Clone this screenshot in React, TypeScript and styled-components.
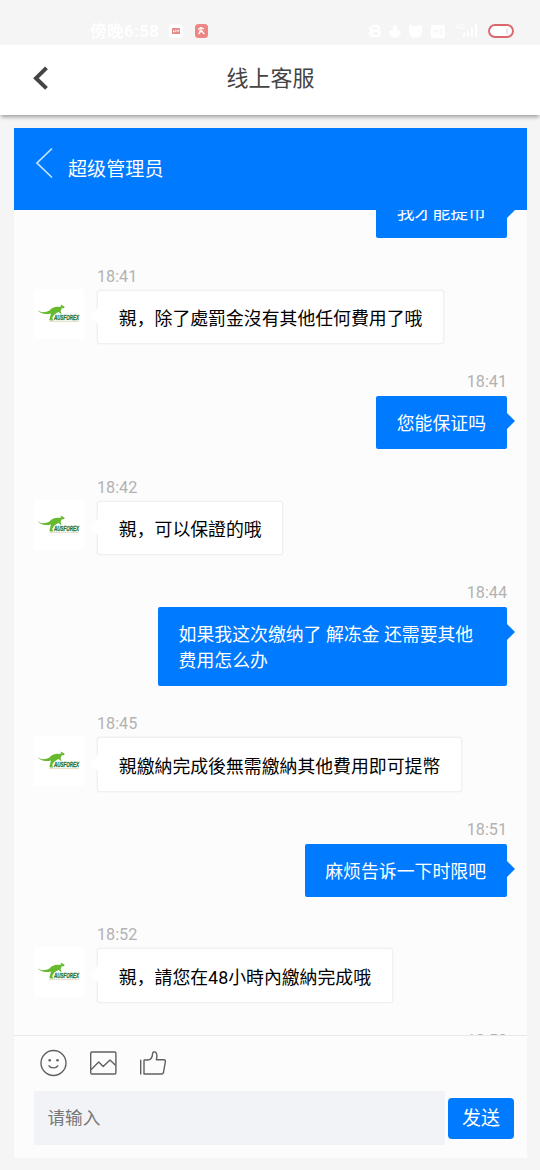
import React from "react";
import styled, { createGlobalStyle } from "styled-components";

const BLUE = "#007aff";

const GlobalStyle = createGlobalStyle`
  * { box-sizing: border-box; }
  body {
    margin: 0;
    background: #f5f5f5;
    font-family: Roboto, "Noto Sans CJK SC", sans-serif;
  }
`;

const Screen = styled.div`
  width: 540px;
  height: 1170px;
  display: flex;
  flex-direction: column;
  overflow: hidden;
  background: #f5f5f5;
`;

const StatusBar = styled.div`
  height: 45px;
  flex: none;
  display: flex;
  justify-content: space-between;
  align-items: flex-start;
  padding: 20px 24px 0 90px;
`;

const StatusGroup = styled.div<{ $gap: number }>`
  display: flex;
  align-items: center;
  gap: ${(p) => p.$gap}px;
  height: 22px;
`;

const Clock = styled.span`
  width: 71px;
  padding-top: 1px;
  font-size: 16.4px;
  line-height: 22px;
  font-weight: 700;
  color: #fff;
  white-space: nowrap;
  letter-spacing: 0.6px;
`;

const TitleBar = styled.header`
  position: relative;
  height: 70px;
  flex: none;
  display: grid;
  grid-template-columns: 80px 1fr 80px;
  align-items: center;
  background: #fff;
  box-shadow: 0 3px 4px -1px rgba(0, 0, 0, 0.36);
`;

const BackButton = styled.button`
  display: flex;
  align-items: center;
  height: 70px;
  padding: 0 0 4px 33px;
  border: 0;
  background: none;
`;

const Title = styled.h1`
  margin: 0;
  padding-left: 1px;
  font-size: 22px;
  line-height: 68px;
  height: 70px;
  font-weight: 400;
  text-align: center;
  color: #444;
`;

const Panel = styled.main`
  width: 513px;
  height: 1030px;
  flex: none;
  margin: 13px 0 0 14px;
  display: flex;
  flex-direction: column;
  background: #fcfcfc;
`;

const AgentBar = styled.div`
  height: 82px;
  flex: none;
  display: flex;
  align-items: center;
  gap: 15px;
  padding: 0 0 0 21px;
  background: ${BLUE};
  color: #fff;
  svg { margin-bottom: 13px; }
`;

const AgentName = styled.span`
  padding-top: 2px;
  font-size: 19.1px;
  line-height: 28px;
`;

const History = styled.section`
  height: 825px;
  flex: none;
  overflow: hidden;
`;

const MessageList = styled.div`
  margin-top: -24.7px;
`;

const MessageRow = styled.article<{ $mine?: boolean }>`
  display: flex;
  flex-direction: ${(p) => (p.$mine ? "row-reverse" : "row")};
  gap: 14px;
  padding: 0 20px;
  margin-bottom: 24.9px;
`;

const Avatar = styled.div`
  width: 50px;
  height: 50px;
  flex: none;
  margin-top: 26px;
  background: #fff;
  svg { display: block; }
`;

const MessageBody = styled.div<{ $mine?: boolean }>`
  display: flex;
  flex-direction: column;
  align-items: ${(p) => (p.$mine ? "flex-end" : "flex-start")};
  max-width: 365px;
`;

const Time = styled.time<{ $mine?: boolean }>`
  height: 28px;
  margin: ${(p) => (p.$mine ? "0" : "0 0 0 -1px")};
  font-size: 16.2px;
  line-height: 28px;
  color: #b2b2b2;
`;

const Bubble = styled.div<{ $mine?: boolean }>`
  position: relative;
  max-width: ${(p) => (p.$mine ? "349px" : "365px")};
  padding: ${(p) => (p.$mine ? "14.7px 21px 12.1px 20.6px" : "15.2px 20.8px 11.6px")};
  border-radius: 2px;
  font-size: 17.86px;
  line-height: 25.8px;
  color: ${(p) => (p.$mine ? "#fff" : "#000")};
  background: ${(p) => (p.$mine ? BLUE : "#fff")};
  box-shadow: ${(p) => (p.$mine ? "none" : "0 0 0 1.5px #f1f1f1")};
  &::after {
    content: "";
    position: absolute;
    top: 17px;
    ${(p) => (p.$mine ? "right: -8px;" : "left: -8px;")}
    border: 8px solid transparent;
    border-width: 8px ${(p) => (p.$mine ? "0 8px 8px" : "8px 8px 0")};
    border-${(p) => (p.$mine ? "left" : "right")}-color: ${(p) => (p.$mine ? BLUE : "#fff")};
  }
`;

const Composer = styled.footer`
  flex: 1;
  border-top: 1.5px solid #e8e8e8;
`;

const Tools = styled.div`
  height: 55px;
  display: flex;
  align-items: center;
  gap: 22px;
  padding: 0 0 2px 25px;
`;

const EntryRow = styled.div`
  display: flex;
  align-items: center;
  gap: 3px;
  padding-left: 20px;
`;

const Entry = styled.input`
  width: 411px;
  height: 54px;
  padding: 0 14px 0 13.5px;
  border: 0;
  outline: 0;
  background: #f2f3f7;
  font: 17.6px Roboto, "Noto Sans CJK SC", sans-serif;
  &::placeholder { color: #777; opacity: 1; }
`;

const SendButton = styled.button`
  width: 66px;
  height: 41px;
  padding: 0;
  border: 0;
  border-radius: 4px;
  background: ${BLUE};
  color: #fff;
  font: 19px/41px Roboto, "Noto Sans CJK SC", sans-serif;
`;

const Kangaroo = () => (
  <svg width="50" height="50" viewBox="0 0 50 50">
    <path
      fill="#67b92e"
      d="M3.3 20.5C6 24.2 11 23.8 15.5 21.6C18 18.5 21.5 17.4 25 18L27.4 17.3L26.4 15.5L28.6 16.4L30.8 18L29.8 19.3L27.8 19.3L26.6 22L27.6 25.4L24.6 23L22.6 24L20 26L18.2 29L19.2 31.5H16.2L15.4 30.5L17 24.4C11 25.8 5.5 24.6 3.3 20.5Z"
    />
    <text x="20" y="31" textLength="25" lengthAdjust="spacingAndGlyphs" fontFamily="Liberation Sans" fontSize="7.2" fontWeight="700" fontStyle="italic" fill="#1d7434" stroke="#1d7434" strokeWidth="0.3">AUSFOREX</text>
    <path d="M15 32.6H45" stroke="#e0d3ab" strokeWidth="0.7" />
  </svg>
);

const NoticeIcons = () => (
  <svg width="42" height="16" viewBox="0 0 42 16">
    <rect x="0" y="1" width="14" height="14" rx="4" fill="#fff" />
    <rect x="3" y="5" width="8" height="6" rx="0.5" fill="#e88a8a" />
    <path d="M4.5 7V9L6.5 8.5V6.8M8 9V7L9.5 8.5V6.5" fill="none" stroke="#fff" strokeWidth="0.7" />
    <rect x="26" y="1" width="13" height="14" rx="3.5" fill="#ee8585" />
    <path d="M29 6.5L32 4.5L35 6M32 4.5V8L35.5 11M32 8L29.5 11M30 8H34" fill="none" stroke="#fff" strokeWidth="1.2" />
  </svg>
);

const SystemIcons = () => (
  <svg width="148" height="22" viewBox="0 0 148 22">
    <g fill="none" stroke="#fff" strokeWidth="2.4">
      <path d="M1 7L4 10L1 15M4 6H8C12 6 12 11 8 11H4V16H8C13 16 13 11 8 11" />
    </g>
    <g fill="#fff">
      <path d="M27 5C29 5 30 8 29 10L33 11C33 20 21 20 21 11L25 10C24 8 25 5 27 5Z" />
      <path d="M41 5L46 6H49L54 5V12C53 20 42 20 41 12Z" />
      <rect x="63" y="5" width="14" height="13" rx="2" />
      <path d="M95 13h2v4h-2zM99 11h2v6h-2zM103 8h2v9h-2zM107 4h2v13h-2z" />
      <text x="87" y="9" fontSize="8" fontFamily="Roboto">4G</text>
    </g>
    <path d="M45 10L47 12M50 12L52 10M66 9V14M66 11.5H69M69 9V14M72 9V14H74V9Z" stroke="#f5f5f5" fill="none" />
    <rect x="121" y="5" width="24" height="12" rx="6" fill="#fff" stroke="#db676c" strokeWidth="1.9" />
    <path d="M139 8.5v5" stroke="#ccc" />
  </svg>
);

const SmileIcon = () => (
  <svg width="28" height="28" viewBox="0 0 28 28" fill="none" stroke="#606060" strokeWidth="1.4" strokeLinecap="round">
    <circle cx="14.5" cy="14" r="12.5" />
    <path d="M10 16.8C11.5 19.6 17.3 19.6 18.8 16.8" />
    <circle cx="10.7" cy="11.2" r="1.3" fill="#606060" stroke="none" />
    <circle cx="18.5" cy="11.2" r="1.3" fill="#606060" stroke="none" />
  </svg>
);

const PictureIcon = () => (
  <svg width="28" height="28" viewBox="0 0 28 28" fill="none" stroke="#606060" strokeWidth="1.4" strokeLinejoin="round">
    <rect x="1.7" y="3" width="25.2" height="22" rx="1.3" />
    <path d="M2 20.7L9.7 13L14.2 17.6L21 11L26.7 16.5" />
  </svg>
);

const LikeIcon = () => (
  <svg width="28" height="28" viewBox="0 0 28 28" fill="none" stroke="#606060" strokeWidth="1.4" strokeLinejoin="round" strokeLinecap="round">
    <path d="M1.7 11.2V25M5 11.7V25H22.5Q24 25 24.4 23.8L26.4 12.5Q26.5 10.8 25 10.8H17.4C18.2 8.2 18 5.5 17.3 4Q16.5 2.6 14.8 3Q13.6 3.3 13.5 5C13.4 8.2 11.8 10.8 8.5 11H5.7Q5 11 5 11.7Z" />
  </svg>
);

type Message = { time?: string; text?: string; mine?: boolean };

const messages: Message[] = [
  { text: "我才能提币", mine: true },
  { time: "18:41", text: "親，除了處罰金沒有其他任何費用了哦" },
  { time: "18:41", text: "您能保证吗", mine: true },
  { time: "18:42", text: "親，可以保證的哦" },
  { time: "18:44", text: "如果我这次缴纳了 解冻金 还需要其他费用怎么办", mine: true },
  { time: "18:45", text: "親繳納完成後無需繳納其他費用即可提幣" },
  { time: "18:51", text: "麻烦告诉一下时限吧", mine: true },
  { time: "18:52", text: "親，請您在48小時內繳納完成哦" },
  { time: "18:53", mine: true },
];

export default function App() {
  return (
    <Screen>
      <GlobalStyle />
      <StatusBar>
        <StatusGroup $gap={8}>
          <Clock>傍晚6:58</Clock>
          <NoticeIcons />
        </StatusGroup>
        <StatusGroup $gap={0}>
          <SystemIcons />
        </StatusGroup>
      </StatusBar>
      <TitleBar>
        <BackButton aria-label="返回">
          <svg width="16" height="24" viewBox="0 0 16 24" fill="none" stroke="#444" strokeWidth="4">
            <path d="M13.5 1.8L3 12.2L13.5 22.4" />
          </svg>
        </BackButton>
        <Title>线上客服</Title>
      </TitleBar>
      <Panel>
        <AgentBar>
          <svg width="18" height="32" viewBox="0 0 18 32" fill="none" stroke="#c4e5ff" strokeWidth="1.7">
            <path d="M17 1.5L2 16L17 30.5" />
          </svg>
          <AgentName>超级管理员</AgentName>
        </AgentBar>
        <History>
          <MessageList>
            {messages.map((m, i) => (
              <MessageRow key={i} $mine={m.mine}>
                {!m.mine && (
                  <Avatar>
                    <Kangaroo />
                  </Avatar>
                )}
                <MessageBody $mine={m.mine}>
                  {m.time && <Time $mine={m.mine}>{m.time}</Time>}
                  {m.text && <Bubble $mine={m.mine}>{m.text}</Bubble>}
                </MessageBody>
              </MessageRow>
            ))}
          </MessageList>
        </History>
        <Composer>
          <Tools>
            <SmileIcon />
            <PictureIcon />
            <LikeIcon />
          </Tools>
          <EntryRow>
            <Entry placeholder="请输入" />
            <SendButton>发送</SendButton>
          </EntryRow>
        </Composer>
      </Panel>
    </Screen>
  );
}
